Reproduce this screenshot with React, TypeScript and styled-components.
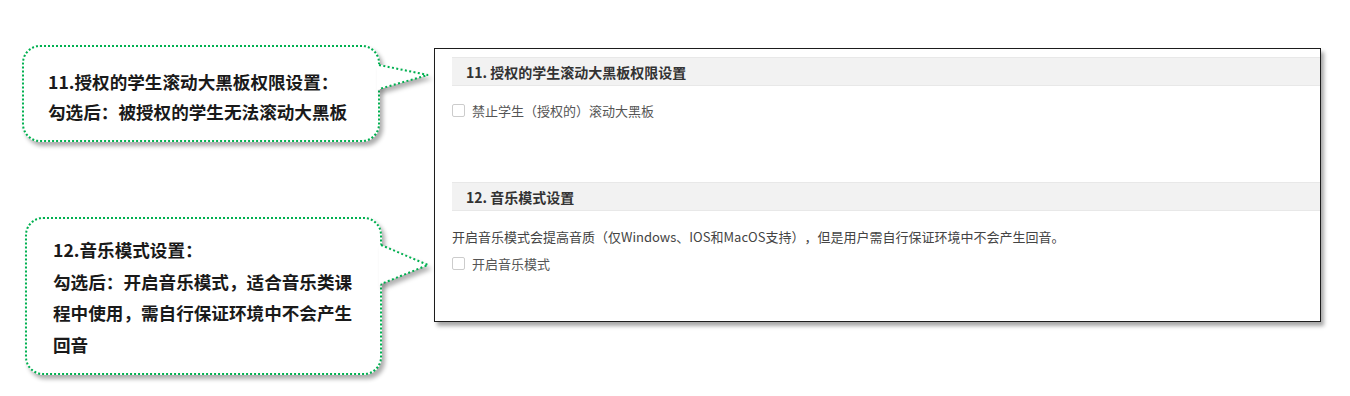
import React from 'react';
import styled, {createGlobalStyle} from "styled-components";

const GlobalStyle = createGlobalStyle`
    body {
        margin: 0;
        background: #fff;
    }
`

type TailType = {
    top: number
    width: number
    height: number
    points: string
    edge: string
}

type NoteType = {
    width: number
    height: number
    marginTop: number
    marginLeft: number
    padding: string
    lineHeight: number
    lines: Array<string>
    tail: TailType
}

const notes: Array<NoteType> = [
    {
        width: 358, height: 97, marginTop: 45, marginLeft: 0, padding: "20px 0 0 24px", lineHeight: 30,
        lines: ["11.授权的学生滚动大黑板权限设置：", "勾选后：被授权的学生无法滚动大黑板"],
        tail: {top: 16, width: 54, height: 30, points: "0,1 51,12 0,27", edge: "2,2 51,12 2,26"}
    },
    {
        width: 357, height: 158, marginTop: 75, marginLeft: 3, padding: "15px 0 0 26px", lineHeight: 31.6,
        lines: ["12.音乐模式设置：", "勾选后：开启音乐模式，适合音乐类课", "程中使用，需自行保证环境中不会产生", "回音"],
        tail: {top: 24, width: 52, height: 44, points: "0,1 49,22 0,42", edge: "2,2 49,22 2,41"}
    }
]

function Callout(props: { note: NoteType }) {
    const {width, height, marginTop, marginLeft, padding, lineHeight, lines, tail} = props.note

    return (
        <StyledCallout $w={width} $h={height} $mt={marginTop} $ml={marginLeft} $pad={padding} $lh={lineHeight}>
            {lines.map(line => <NoteLine key={line}>{line}</NoteLine>)}
            <Tail $top={tail.top} width={tail.width} height={tail.height} viewBox={`0 0 ${tail.width} ${tail.height}`}>
                <polygon points={tail.points} fill="#fff"/>
                <polyline points={tail.edge} fill="none" stroke="#00b050" strokeWidth="2" strokeDasharray="2 2.4"/>
            </Tail>
        </StyledCallout>
    )
}

function Option(props: { label: string }) {
    return (
        <OptionRow>
            <CheckBox/>
            <span>{props.label}</span>
        </OptionRow>
    )
}

export default function App() {
    return (
        <Page>
            <GlobalStyle/>
            <Notes>
                {notes.map(note => <Callout key={note.lines[0]} note={note}/>)}
            </Notes>
            <Frame>
                <section>
                    <SectionHeader>11. 授权的学生滚动大黑板权限设置</SectionHeader>
                    <SectionBody>
                        <Option label="禁止学生（授权的）滚动大黑板"/>
                    </SectionBody>
                </section>
                <SecondSection>
                    <SectionHeader>12. 音乐模式设置</SectionHeader>
                    <SectionBody $pt={17}>
                        <Description>开启音乐模式会提高音质（仅Windows、IOS和MacOS支持），但是用户需自行保证环境中不会产生回音。</Description>
                        <Option label="开启音乐模式"/>
                    </SectionBody>
                </SecondSection>
            </Frame>
        </Page>
    );
}

const Page = styled.div`
    display: flex;
    align-items: flex-start;
    width: 1350px;
    height: 396px;
    background: #fff;
`

const Notes = styled.div`
    display: flex;
    flex-direction: column;
    align-items: flex-start;
    width: 434px;
    padding-left: 22px;
    box-sizing: border-box;
    flex-shrink: 0;
`

const StyledCallout = styled.div<{ $w: number, $h: number, $mt: number, $ml: number, $pad: string, $lh: number }>`
    position: relative;
    box-sizing: border-box;
    width: ${props => props.$w}px;
    height: ${props => props.$h}px;
    margin-top: ${props => props.$mt}px;
    margin-left: ${props => props.$ml}px;
    padding: ${props => props.$pad};
    border: 2px dotted #00b050;
    border-radius: 18px;
    background: #fff;
    box-shadow: 3px 4px 4px rgba(0, 0, 0, 0.32);
    font-family: "Noto Sans CJK SC", "Microsoft YaHei", sans-serif;
    font-size: 17.6px;
    font-weight: 700;
    line-height: ${props => props.$lh}px;
    color: #1a1a1a;
`

const NoteLine = styled.div`
    white-space: nowrap;
`

const Tail = styled.svg<{ $top: number }>`
    position: absolute;
    left: calc(100% - 1px);
    top: ${props => props.$top}px;
    overflow: visible;
    filter: drop-shadow(3px 4px 2px rgba(0, 0, 0, 0.3));
`

const Frame = styled.div`
    flex-shrink: 0;
    box-sizing: border-box;
    width: 887px;
    margin-top: 48px;
    padding: 8px 0 49px 17px;
    border: 1px solid #1c1c1c;
    background: #fff;
    box-shadow: 3px 4px 4px rgba(0, 0, 0, 0.35);
    font-family: "Noto Sans CJK SC", "Microsoft YaHei", sans-serif;
    text-spacing-trim: space-all;
`

const SecondSection = styled.section`
    margin-top: 63px;
`

const SectionHeader = styled.h3`
    display: flex;
    align-items: center;
    box-sizing: border-box;
    height: 29px;
    margin: 0;
    padding-left: 14px;
    border-top: 1px solid #e8e8e8;
    border-bottom: 1px solid #e8e8e8;
    background: #f2f2f2;
    font-size: 14px;
    font-weight: 700;
    color: #333;
`

const SectionBody = styled.div<{ $pt?: number }>`
    display: flex;
    flex-direction: column;
    gap: 8px;
    padding-top: ${props => props.$pt ?? 15}px;
`

const Description = styled.p`
    margin: 0;
    font-size: 13px;
    line-height: 18px;
    color: #444;
`

const OptionRow = styled.label`
    display: flex;
    align-items: center;
    gap: 7px;
    height: 18px;
    font-size: 13px;
    color: #555;
`

const CheckBox = styled.span`
    display: block;
    box-sizing: border-box;
    width: 13px;
    height: 13px;
    border: 1px solid #cccccc;
    border-radius: 2px;
    background: #fff;
`
